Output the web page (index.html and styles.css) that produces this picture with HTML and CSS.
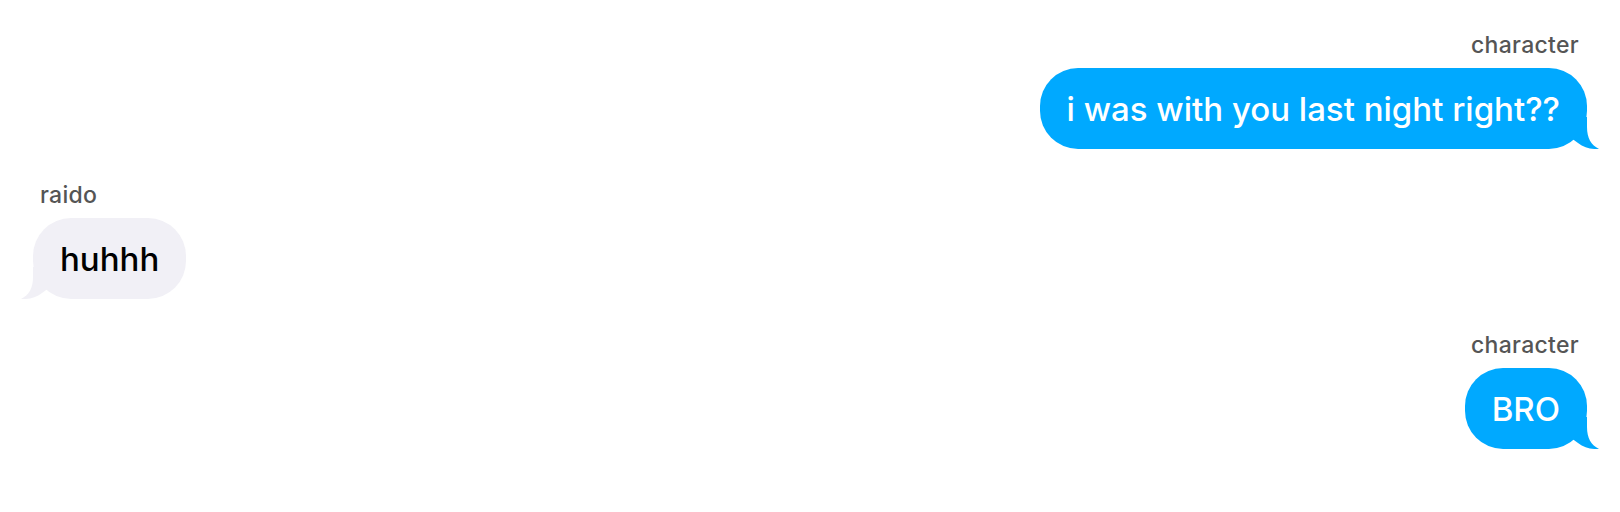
FILE: index.html
```html
<!DOCTYPE html>
<html lang="en">
<head>
    <meta charset="UTF-8">
    <meta name="viewport" content="width=device-width, initial-scale=1.0">
    <title>Chat</title>
    <link rel="stylesheet" href="styles.css">
</head>
<body>
    <div class="chat">
        <div class="msg sent">
            <div class="sender">character</div>
            <div class="bubble">
                i was with you last night right??
                <svg class="tail" viewBox="0 0 40 32" aria-hidden="true"><path d="M0 0 H28 V10 C28 21 32 28 40 32 C32 32.5 25 30.5 19 26 L8 18 L0 12 Z"/></svg>
            </div>
        </div>

        <div class="msg received">
            <div class="sender">raido</div>
            <div class="bubble">
                huhhh
                <svg class="tail" viewBox="0 0 40 32" aria-hidden="true"><path d="M0 0 H28 V10 C28 21 32 28 40 32 C32 32.5 25 30.5 19 26 L8 18 L0 12 Z"/></svg>
            </div>
        </div>

        <div class="msg sent">
            <div class="sender">character</div>
            <div class="bubble">
                BRO
                <svg class="tail" viewBox="0 0 40 32" aria-hidden="true"><path d="M0 0 H28 V10 C28 21 32 28 40 32 C32 32.5 25 30.5 19 26 L8 18 L0 12 Z"/></svg>
            </div>
        </div>
    </div>
</body>
</html>
```

FILE: styles.css
```css
body {
    margin: 0;
    padding: 0;
    background: #ffffff;
    font-family: Inter, "Noto Sans", sans-serif;
}

.chat {
    display: flex;
    flex-direction: column;
    gap: 34px;
    padding: 33px 33px 0;
}

.msg {
    display: flex;
    flex-direction: column;
    gap: 11px;
}

.msg.sent {
    align-items: flex-end;
}

.msg.received {
    align-items: flex-start;
}

.sender {
    font-size: 23px;
    line-height: 24px;
    font-weight: 500;
    letter-spacing: 0.3px;
    color: #555555;
    padding: 0 8px 0 7px;
}

.bubble {
    position: relative;
    font-size: 33px;
    line-height: 37px;
    font-weight: 500;
    padding: 23px 27px 21px;
    border-radius: 38px;
}

.sent .bubble {
    background: #00a9ff;
    color: #ffffff;
}

.received .bubble {
    background: #f1f0f6;
    color: #000000;
}

/* tail hangs off the bottom corner */
.tail {
    position: absolute;
    bottom: 0;
    width: 40px;
    height: 32px;
}

.sent .tail {
    right: -12px;
    fill: #00a9ff;
}

.received .tail {
    left: -12px;
    fill: #f1f0f6;
    transform: scaleX(-1);
}
```
